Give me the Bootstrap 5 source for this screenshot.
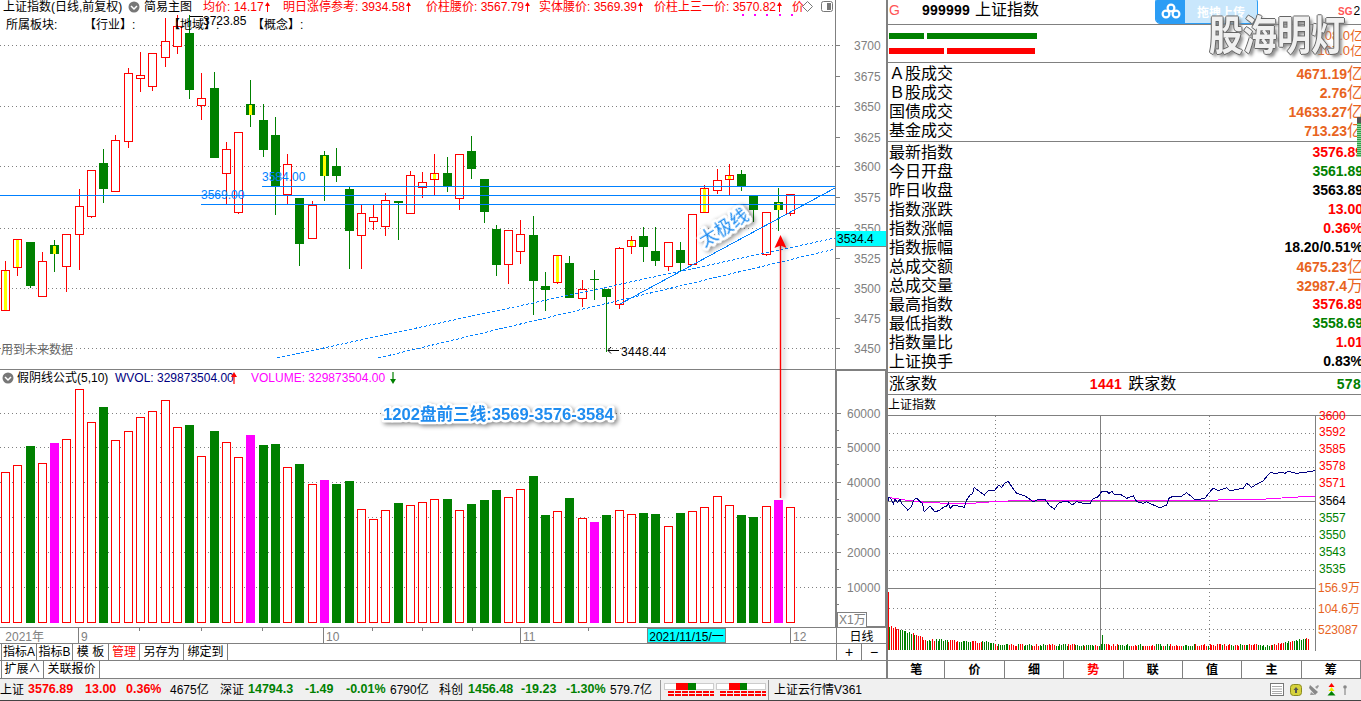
<!DOCTYPE html>
<html lang="zh-CN">
<head>
    <meta charset="UTF-8">
    <meta name="viewport" content="width=device-width, initial-scale=1.0">
    <title>上证指数</title>
    <link href="https://cdn.jsdelivr.net/npm/bootstrap@5.3.0/dist/css/bootstrap.min.css" rel="stylesheet">
    <style>
        html, body { margin: 0; background: #fff; overflow: hidden; }
        body { font-family: "Liberation Sans", "Noto Sans CJK SC", sans-serif; font-size: 12px; line-height: 1; color: #000; }
        .app { width: 1361px; height: 701px; }
        .work { height: 679px; }
        .left-col { width: 886px; }
        .right-col { width: 475px; border-left: 2px solid #808080; overflow: hidden; position: relative; }

        /* chart headers lie over the chart */
        .chart-wrap { height: 627px; position: relative; }
        #kline { display: block; }
        .hdr-one, .hdr-two, .vol-hdr { position: absolute; display: grid; align-items: center; white-space: nowrap; }
        .hdr-one { left: 3px; top: 0; height: 13px; grid-template-columns: 125px 16px 59px 80px 143px 113px 115px 138px 10px 19px 14px; color: #f00; }
        .hdr-two { left: 6px; top: 18px; height: 13px; grid-template-columns: 78px 84px 84px 60px; }
        .vol-hdr { left: 2px; top: 371px; height: 13px; grid-template-columns: 15px 98px 116px 20px 139px 10px; }
        .txt-black { color: #000; }
        .txt-navy { color: #000080; }
        .txt-pink { color: #f0f; }
        .arrow-mark { display: inline-block; vertical-align: -1px; margin-left: 1px; }

        .axis-row { height: 17px; border-top: 1px solid #808080; border-bottom: 1px solid #808080; color: #808080; }
        .axis-track { width: 836px; position: relative; padding: 3px 0 0 2px; }
        .axis-mark { position: absolute; top: 0; bottom: 0; border-left: 1px solid #808080; padding: 3px 0 0 2px; }
        .axis-tick { position: absolute; top: 0; height: 3px; border-left: 1px solid #808080; }
        .date-box { position: absolute; left: 647px; top: 0; bottom: 0; width: 79px; background: #0ff; color: #000; border: 1px solid #808080; text-align: center; padding-top: 2px; }
        .period-box { width: 50px; border-left: 1px solid #808080; color: #000; text-align: center; font-size: 12px; padding-top: 3px; }

        .tool-row { height: 17px; border-bottom: 1px solid #808080; padding-left: 1px; }
        .tool-row.second { height: 18px; }
        .tool-btn { width: 36px; border-right: 1px solid #808080; padding-top: 2px; text-align: center; white-space: nowrap; }
        .tool-btn:first-child { border-left: 1px solid #808080; }
        .tb-short { width: 31px; }
        .tb-long { width: 44px; }
        .tb-more { width: 43px; }
        .tb-link { width: 56px; }
        .tool-fill { flex: 1; }
        .zoom-box { width: 50px; border-left: 1px solid #808080; }
        .zoom-box span { flex: 1; text-align: center; padding-top: 2px; font-size: 14px; line-height: 12px; }
        .zoom-box span + span { border-left: 1px solid #808080; }

        .quote-title { height: 25px; border-bottom: 1px solid #808080; font-size: 16px; padding: 0 0 5px 1px; }
        .q-g { width: 33px; color: #f55; font-size: 14px; }
        .q-code { font-size: 14px; font-weight: 700; letter-spacing: .2px; margin-right: 5px; }
        .bars-box { height: 38px; border-bottom: 1px solid #808080; padding-left: 1px; position: relative; }
        .flow-bar { height: 6px; width: 148px; margin-top: 8px; gap: 3px; }
        .flow-bar + .flow-bar { margin-top: 9px; }
        .flow-bar i { display: block; height: 6px; }
        .flow-green i { background: #008000; }
        .flow-red i { background: #f00; }
        .fg-a { width: 35px; } .fg-b { width: 110px; } .fr-a { width: 55px; } .fr-b { width: 88px; }
        .flow-num { position: absolute; right: -2px; color: #e8641e; font-size: 13px; line-height: 15px; }
        .flow-num.top-one { top: 3px; } .flow-num.top-two { top: 18px; }

        .q-block { border-bottom: 1px solid #808080; padding: 1px 0 1px 1px; }
        .q-row { height: 19px; line-height: 19px; font-size: 16px; white-space: nowrap; }
        .q-num { font-size: 14px; font-weight: 700; margin-right: -2px; }
        .q-num em { font-style: normal; font-weight: 400; font-size: 16px; }
        .up { color: #f00; } .down { color: #008000; } .flat { color: #000; } .amt { color: #e8641e; }
        .breadth { height: 22px; border-bottom: 1px solid #808080; font-size: 16px; line-height: 22px; padding-left: 1px; white-space: nowrap; }
        .breadth b { font-size: 14px; letter-spacing: .3px; }
        .br-label { width: 160px; } .br-num { width: 76px; text-align: right; margin-right: 6px; } .br-label2 { width: 211px; }
        .mini-title { height: 21px; border-bottom: 1px solid #808080; padding: 4px 0 0 0; }
        .intraday svg { display: block; overflow: visible; }
        .pager { height: 9px; }
        .page-row { height: 19px; border-top: 1px solid #808080; border-bottom: 1px solid #808080; }
        .page-row span { width: 60px; border-right: 1px solid #808080; text-align: center; padding-top: 3px; font-weight: 700; }
        .page-row span:first-child { width: 58px; }
        .page-row span.on { color: #f00; }

        .status { height: 22px; background: #f0f0f0; border-bottom: 1px solid #444; }
        .status-grid { display: grid; grid-template-columns: 28px 57px 41px 44px 50px 28px 57px 41px 44px 49px 29px 53px 45px 44px 50px; align-items: center; white-space: nowrap; width: 660px; }
        .status-grid b { font-size: 12.5px; }
        .status-sep { border-left: 1px solid #999; height: 20px; align-self: center; margin-right: 2px; }
        .market-name { width: 500px; padding-left: 3px; }
        .tray { gap: 6px; margin-left: -1px; }

        .upload-badge { position: absolute; left: 1155px; top: -3px; width: 103px; height: 27px; border-radius: 5px; overflow: hidden; border: 1px solid #2b9df5; background: #c9e7fc; color: #fff; font-weight: 700; font-size: 12px; }
        .upload-icon { width: 29px; background: #2b9df5; }
        .upload-label { width: 72px; text-align: center; padding-top: 9px; }
        .stamp { position: absolute; left: 1209px; top: 9px; font-family: "Noto Sans CJK SC", sans-serif; font-weight: 700; font-size: 34px; line-height: 40px; color: rgba(255,255,255,.9); white-space: nowrap; transform: scaleY(1.2); transform-origin: top; text-shadow: 1px 0 #666, -1px 0 #666, 0 1px #666, 0 -1px #666, 3px 3px 3px #888; }
        .sg-tag { position: absolute; left: 1338px; top: 5px; font-size: 10px; font-weight: 700; color: #f55; }
        .sg-tag i { font-style: normal; color: #000; font-weight: 400; margin-left: 1px; font-size: 12px; }
        .level-strip { position: absolute; left: 1357px; top: 117px; width: 4px; height: 40px; background: repeating-linear-gradient(#2ea043 0 1px, #8fd19e 1px 2px); border-top: 6px solid #555; }
    </style>
</head>
<body>
<div class="app d-flex flex-column position-relative">
    <div class="work d-flex">
        <div class="left-col d-flex flex-column">
            <div class="chart-wrap">
                <svg id="kline" width="886" height="627" viewBox="0 0 886 627"></svg>

                <div class="hdr-one">
                    <span class="txt-black">上证指数(日线,前复权)</span>
                    <svg width="12" height="12" viewBox="0 0 12 12"><circle cx="6" cy="6" r="5.5" fill="#777"/><path d="M3 5l3 3 3-3" fill="none" stroke="#fff" stroke-width="1.5"/></svg>
                    <span class="txt-black">简易主图</span>
                    <span>均价: 14.17<svg class="arrow-mark" width="5" height="10" viewBox="0 0 5 10"><path d="M2.5 0L5 4H3v6H2V4H0z" fill="#f00"/></svg></span>
                    <span>明日涨停参考: 3934.58<svg class="arrow-mark" width="5" height="10" viewBox="0 0 5 10"><path d="M2.5 0L5 4H3v6H2V4H0z" fill="#f00"/></svg></span>
                    <span>价柱腰价: 3567.79<svg class="arrow-mark" width="5" height="10" viewBox="0 0 5 10"><path d="M2.5 0L5 4H3v6H2V4H0z" fill="#f00"/></svg></span>
                    <span>实体腰价: 3569.39<svg class="arrow-mark" width="5" height="10" viewBox="0 0 5 10"><path d="M2.5 0L5 4H3v6H2V4H0z" fill="#f00"/></svg></span>
                    <span>价柱上三一价: 3570.82<svg class="arrow-mark" width="5" height="10" viewBox="0 0 5 10"><path d="M2.5 0L5 4H3v6H2V4H0z" fill="#f00"/></svg></span>
                    <span>价</span>
                    <svg width="11" height="11" viewBox="0 0 11 11"><path d="M5.5.5l5 5-5 5-5-5z" fill="#fff" stroke="#777"/></svg>
                    <svg width="12" height="11" viewBox="0 0 12 11"><rect x=".5" y=".5" width="11" height="10" rx="2" fill="#fff" stroke="#777"/><rect x="6" y="2" width="4" height="7" fill="#777"/></svg>
                </div>
                <div class="hdr-two">
                    <span>所属板块:</span>
                    <span>【行业】:</span>
                    <span>【地域】:</span>
                    <span>【概念】:</span>
                </div>
                <div class="vol-hdr">
                    <svg width="12" height="12" viewBox="0 0 12 12"><circle cx="6" cy="6" r="5.5" fill="#777"/><path d="M3 5l3 3 3-3" fill="none" stroke="#fff" stroke-width="1.5"/></svg>
                    <span>假阴线公式(5,10)</span>
                    <span class="txt-navy">WVOL: 329873504.00</span>
                    <svg width="6" height="12" viewBox="0 0 6 12"><path d="M3 0l3 5H3.6v7H2.4V5H0z" fill="#f00"/></svg>
                    <span class="txt-pink">VOLUME: 329873504.00</span>
                    <svg width="6" height="12" viewBox="0 0 6 12"><path d="M3 12l3-5H3.6V0H2.4v7H0z" fill="#008000"/></svg>
                </div>
            </div>

            <div class="axis-row d-flex">
                <div class="axis-track" id="axisTrack">
                    <span>&nbsp;2021年</span>
                    <span class="date-box">2021/11/15/一</span>
                </div>
                <div class="period-box">日线</div>
            </div>
            <div class="tool-row d-flex">
                <span class="tool-btn">指标A</span>
                <span class="tool-btn">指标B</span>
                <span class="tool-btn">模 板</span>
                <span class="tool-btn tb-short up">管理</span>
                <span class="tool-btn tb-long">另存为</span>
                <span class="tool-btn tb-long">绑定到</span>
                <span class="tool-fill"></span>
                <div class="zoom-box d-flex"><span>+</span><span>−</span></div>
            </div>
            <div class="tool-row second d-flex">
                <span class="tool-btn tb-more">扩展∧</span>
                <span class="tool-btn tb-link">关联报价</span>
            </div>
        </div>

        <div class="right-col d-flex flex-column">
            <div class="quote-title d-flex align-items-center">
                <span class="q-g">G</span>
                <span class="q-code">999999</span>
                <span>上证指数</span>
            </div>
            <div class="bars-box">
                <div class="flow-bar flow-green d-flex"><i class="fg-a"></i><i class="fg-b"></i></div>
                <div class="flow-bar flow-red d-flex"><i class="fr-a"></i><i class="fr-b"></i></div>
                <span class="flow-num top-one">108.0亿</span>
                <span class="flow-num top-two">107.0亿</span>
            </div>
            <div class="q-block">
                <div class="q-row d-flex justify-content-between"><span>Ａ股成交</span><span class="q-num amt">4671.19<em>亿</em></span></div>
                <div class="q-row d-flex justify-content-between"><span>Ｂ股成交</span><span class="q-num amt">2.76<em>亿</em></span></div>
                <div class="q-row d-flex justify-content-between"><span>国债成交</span><span class="q-num amt">14633.27<em>亿</em></span></div>
                <div class="q-row d-flex justify-content-between"><span>基金成交</span><span class="q-num amt">713.23<em>亿</em></span></div>
            </div>
            <div class="q-block">
                <div class="q-row d-flex justify-content-between"><span>最新指数</span><span class="q-num up">3576.89</span></div>
                <div class="q-row d-flex justify-content-between"><span>今日开盘</span><span class="q-num down">3561.89</span></div>
                <div class="q-row d-flex justify-content-between"><span>昨日收盘</span><span class="q-num flat">3563.89</span></div>
                <div class="q-row d-flex justify-content-between"><span>指数涨跌</span><span class="q-num up">13.00</span></div>
                <div class="q-row d-flex justify-content-between"><span>指数涨幅</span><span class="q-num up">0.36%</span></div>
                <div class="q-row d-flex justify-content-between"><span>指数振幅</span><span class="q-num flat">18.20/0.51%</span></div>
                <div class="q-row d-flex justify-content-between"><span>总成交额</span><span class="q-num amt">4675.23<em>亿</em></span></div>
                <div class="q-row d-flex justify-content-between"><span>总成交量</span><span class="q-num amt">32987.4<em>万</em></span></div>
                <div class="q-row d-flex justify-content-between"><span>最高指数</span><span class="q-num up">3576.89</span></div>
                <div class="q-row d-flex justify-content-between"><span>最低指数</span><span class="q-num down">3558.69</span></div>
                <div class="q-row d-flex justify-content-between"><span>指数量比</span><span class="q-num up">1.01</span></div>
                <div class="q-row d-flex justify-content-between"><span>上证换手</span><span class="q-num flat">0.83%</span></div>
            </div>
            <div class="breadth d-flex">
                <span class="br-label">涨家数</span>
                <b class="br-num up">1441</b>
                <span class="br-label2">跌家数</span>
                <b class="down">578</b>
            </div>
            <div class="mini-title">上证指数</div>
            <div class="intraday">
                <svg id="trend" width="473" height="235" viewBox="888 416 473 235"></svg>
            </div>
            <div class="pager"></div>
            <div class="page-row d-flex">
                <span>笔</span><span>价</span><span>细</span><span class="on">势</span><span>联</span><span>值</span><span>主</span><span>筹</span>
            </div>
        </div>
    </div>

    <div class="status d-flex">
        <div class="status-grid">
            <span>上证</span><b class="up">3576.89</b><b class="up">13.00</b><b class="up">0.36%</b><span>4675亿</span>
            <span>深证</span><b class="down">14794.3</b><b class="down">-1.49</b><b class="down">-0.01%</b><span>6790亿</span>
            <span>科创</span><b class="down">1456.48</b><b class="down">-19.23</b><b class="down">-1.30%</b><span>579.7亿</span>
        </div>
        <span class="status-sep"></span>
        <svg width="105" height="20" viewBox="662 680 105 20" class="align-self-center">
            <rect x="663.5" y="683.5" width="49" height="6" fill="#fff" stroke="#ccc"/>
            <rect x="675" y="683" width="12" height="7" fill="#f00"/><rect x="687" y="683" width="8" height="7" fill="#008000"/>
            <rect x="715.5" y="683.5" width="49" height="6" fill="#fff" stroke="#ccc"/>
            <rect x="728" y="683" width="11" height="7" fill="#f00"/><rect x="739" y="683" width="7" height="7" fill="#008000"/>
            <path d="M667 692h46M667 695h46M719 692h46M719 695h46" stroke="#f00" stroke-width="2" stroke-dasharray="6 1"/>
        </svg>
        <span class="status-sep"></span>
        <span class="market-name align-self-center">上证云行情V361</span>
        <div class="tray d-flex align-items-center">
            <svg width="14" height="13" viewBox="0 0 14 13"><rect x=".5" y=".5" width="13" height="12" fill="#fff" stroke="#777"/><path d="M2 3.5h10M2 6h10M2 8.5h10M2 10.5h10" stroke="#aaa"/></svg>
            <svg width="12" height="12" viewBox="0 0 12 12"><rect x=".5" y=".5" width="11" height="11" rx="3" fill="#d6d23c" stroke="#8a8a20"/><path d="M6 3l2.5 3H7v3H5V6H3.5z" fill="#555"/></svg>
            <svg width="12" height="12" viewBox="0 0 12 12"><path d="M2 1l8 7-3 3L1 4z" fill="#888"/><path d="M7 3l3-2 1 1-2 3zM3 8l-1 3h5z" fill="#999"/></svg>
            <svg width="11" height="13" viewBox="0 0 11 13"><path d="M5.5 0l3 4h-6z" fill="#f00"/><path d="M5.5 4l3 4h-6z" fill="#ee0"/><path d="M5.5 8l4 4.5h-8z" fill="#008000"/></svg>
            <svg width="4" height="10" viewBox="0 0 4 10"><circle cx="2" cy="2" r="1.8" fill="#888"/><rect x="1.3" y="3" width="1.4" height="7" fill="#999"/></svg>
        </div>
    </div>

    <div class="upload-badge d-flex">
        <span class="upload-icon d-flex align-items-center justify-content-center">
            <svg width="20" height="16" viewBox="0 0 20 16"><g fill="none" stroke="#fff" stroke-width="2.2"><circle cx="5" cy="11" r="3.4"/><circle cx="15" cy="11" r="3.4"/><circle cx="10" cy="5" r="3.4"/></g></svg>
        </span>
        <span class="upload-label">拖拽上传</span>
    </div>
    <div class="stamp">股海明灯</div>
    <div class="sg-tag">SG<i>2</i></div>
    <div class="level-strip"></div>
</div>

<script src="https://cdn.jsdelivr.net/npm/bootstrap@5.3.0/dist/js/bootstrap.bundle.min.js"></script>
<script>
    const kline = document.getElementById('kline');
    const trend = document.getElementById('trend');
    const GRAY = '#808080', BLUE = '#0080ff', RED = '#f00', GREEN = '#008000', PINK = '#f0f';
    const CRISP = {'shape-rendering': 'crispEdges'};

    function shape(svg, name, attrs, text) {
        const el = document.createElementNS('http://www.w3.org/2000/svg', name);
        for (const k in attrs) el.setAttribute(k, attrs[k]);
        if (text !== undefined) el.textContent = text;
        svg.appendChild(el);
        return el;
    }
    function line(svg, x1, y1, x2, y2, color, extra) {
        return shape(svg, 'line', Object.assign({x1, y1, x2, y2, stroke: color, 'stroke-width': 1}, CRISP, extra || {}));
    }
    function dotted(svg, x1, y, x2) {
        line(svg, x1, y + .5, x2, y + .5, GRAY, {'stroke-dasharray': '1 3'});
    }
    function label(svg, x, y, s, color, extra) {
        return shape(svg, 'text', Object.assign({x, y, fill: color, 'font-size': 12, 'font-family': '"Liberation Sans", "Noto Sans CJK SC", sans-serif'}, extra || {}), s);
    }

    // grid + axis of the candle panel
    [[45, '3700'], [106, '3650'], [166, '3600'], [228, '3550'], [288, '3500'], [348, '3450']].forEach(g => dotted(kline, 0, g[0], 836));
    [[45, '3700'], [76, '3675'], [106, '3650'], [137, '3625'], [166, '3600'], [197, '3575'], [228, '3550'], [258, '3525'], [288, '3500'], [318, '3475'], [348, '3450']].forEach(g => {
        line(kline, 836, g[0] + .5, 840, g[0] + .5, GRAY);
        label(kline, 854, g[0] + 5, g[1], GRAY);
    });
    line(kline, 835.5, 0, 835.5, 369, GRAY);
    line(kline, 0, 369.5, 836, 369.5, GRAY);

    // grid + axis of the volume panel
    [[413, '60000'], [447, '50000'], [482, '40000'], [517, '30000'], [552, '20000'], [587, '10000']].forEach(g => {
        dotted(kline, 0, g[0], 836);
        line(kline, 836, g[0] + .5, 841, g[0] + .5, GRAY);
        line(kline, 836, g[0] + 17.5, 839, g[0] + 17.5, GRAY);
        label(kline, 847, g[0] + 5, g[1], GRAY);
    });
    shape(kline, 'rect', {x: 836, y: 370, width: 50, height: 257, fill: 'none', stroke: GRAY, 'stroke-width': 2});
    shape(kline, 'rect', {x: 837.5, y: 612.5, width: 29, height: 15, fill: '#fff', stroke: GRAY});
    label(kline, 839, 624, 'X1万', GRAY);

    // type, bodyTop, bodyBottom, wickTop, wickBottom  (r red, g green, y red with yellow, h green with yellow)
    const candles = [
        ['y',270,310,261,310],['y',239,267,239,276],['g',242,286,242,288],['r',261,296,252,296],['h',245,254,240,272],
        ['r',234,266,234,292],['r',206,234,189,270],['r',170,216,170,218],['g',163,189,149,203],['r',140,191,135,191],
        ['r',73,141,68,148],['r',75,78,52,92],['r',53,86,53,91],['r',41,57,18,67],['r',26,46,15,54],
        ['g',33,90,15,99],['r',98,105,73,120],['g',88,158,72,158],['r',149,173,142,204],['r',132,212,132,214],
        ['h',104,115,80,127],['g',120,150,104,157],['g',135,186,117,215],['r',164,194,154,204],['g',198,244,198,266],
        ['r',205,238,201,238],['h',155,176,151,201],['g',166,176,148,182],['g',189,231,187,269],['r',213,235,205,269],
        ['r',217,221,205,230],['r',200,226,193,236],['g',201,203,201,240],['r',175,213,171,214],['r',182,187,172,198],
        ['y',173,179,154,195],['g',173,186,157,192],['r',154,198,154,210],['g',151,169,136,179],['g',179,212,179,223],
        ['g',229,265,225,276],['r',230,264,230,284],['r',234,251,220,264],['g',235,281,216,315],['g',286,290,272,311],
        ['y',255,282,255,284],['g',263,298,256,298],['r',289,298,280,307],['g',279,280,270,300],['g',289,297,289,352],
        ['r',248,304,247,309],['y',240,246,236,254],['g',236,247,227,262],['g',251,261,227,266],['r',242,266,242,271],
        ['g',250,263,242,271],['r',214,264,214,264],['y',188,212,185,212],['r',180,190,169,194],['y',175,179,164,195],
        ['g',174,186,170,191],['g',196,210,196,222],['r',212,254,212,256],['h',202,210,188,231],['r',194,213,194,216]
    ];
    const volTops = [
        472,465,446,463,443,439,389,422,407,440,431,417,411,400,427,425,456,431,442,457,435,445,444,467,464,484,480,484,481,509,519,510,503,
        505,502,499,499,510,504,500,490,497,489,476,515,511,498,518,522,515,510,514,513,514,526,513,511,507,496,505,515,517,506,500,507
    ];
    const colX = i => Math.floor(5.5 + i * 12.27);

    candles.forEach((c, i) => {
        const x = colX(i), wick = (c[0] === 'g' || c[0] === 'h') ? GREEN : RED;
        line(kline, x + .5, c[3], x + .5, c[4], wick);
        if (wick === RED) {
            shape(kline, 'rect', Object.assign({x: x - 3.5, y: c[1] + .5, width: 8, height: c[2] - c[1], fill: '#fff', stroke: RED}, CRISP));
        } else {
            shape(kline, 'rect', Object.assign({x: x - 4, y: c[1], width: 9, height: Math.max(1, c[2] - c[1]), fill: GREEN}, CRISP));
        }
        if (c[0] === 'y' || c[0] === 'h') {
            shape(kline, 'rect', Object.assign({x: x - 1, y: c[1] + 1, width: 3, height: c[2] - c[1] - 1, fill: '#ff0'}, CRISP));
        }
    });

    // volume colours: pink bars are the "false bearish" days
    const pinkBars = [4, 20, 26, 48, 63];
    volTops.forEach((top, i) => {
        const x = colX(i), c = candles[i][0];
        if (pinkBars.includes(i)) {
            shape(kline, 'rect', Object.assign({x: x - 4, y: top, width: 9, height: 623 - top, fill: PINK}, CRISP));
        } else if (c === 'g' || c === 'h') {
            shape(kline, 'rect', Object.assign({x: x - 4, y: top, width: 9, height: 623 - top, fill: GREEN}, CRISP));
        } else {
            shape(kline, 'rect', Object.assign({x: x - 3.5, y: top + .5, width: 8, height: 622 - top, fill: '#fff', stroke: RED}, CRISP));
        }
    });

    // drawn lines on the chart
    line(kline, 0, 195.5, 835, 195.5, BLUE);
    line(kline, 262, 186.5, 835, 186.5, BLUE);
    line(kline, 201, 204.5, 835, 204.5, BLUE);
    label(kline, 262, 181, '3584.00', BLUE);
    label(kline, 201, 199, '3569.00', BLUE);
    line(kline, 620, 304, 835, 188, BLUE);
    line(kline, 277, 358, 835, 238, BLUE, {'stroke-dasharray': '3 2'});
    line(kline, 378, 358, 835, 249, BLUE, {'stroke-dasharray': '3 2'});

    // min / max markers
    line(kline, 190, 16.5, 203, 16.5, '#000');
    label(kline, 203, 25, '3723.85', '#000');
    line(kline, 608, 350.5, 619, 350.5, '#000');
    shape(kline, 'path', {d: 'M611 347l-3 3.5 3 3', fill: 'none', stroke: '#000'});
    label(kline, 621, 356, '3448.44', '#000', {'letter-spacing': '.3'});
    label(kline, 1, 354, '用到未来数据', '#666');

    // top dots and the price tag on the axis
    [742, 754, 766, 779, 791].forEach(x => shape(kline, 'rect', {x, y: 14, width: 2, height: 2, fill: PINK}));
    shape(kline, 'rect', {x: 836, y: 231, width: 50, height: 15, fill: '#0ff'});
    line(kline, 836, 246.5, 886, 246.5, GRAY);
    label(kline, 837, 243, '3534.4', '#000');

    // hand drawn annotations
    const stickerFont = {'font-family': '"Liberation Sans", "Noto Sans CJK SC", sans-serif', fill: '#1e8cf0', stroke: '#fff', 'paint-order': 'stroke', 'stroke-linejoin': 'round', style: 'filter:drop-shadow(2px 2px 2px rgba(0,0,0,.45))'};
    shape(kline, 'text', Object.assign({}, stickerFont, {x: 724, y: 234, 'font-size': 18, 'stroke-width': 6, 'text-anchor': 'middle', transform: 'rotate(-32 724 228)'}), '太极线');
    shape(kline, 'text', Object.assign({}, stickerFont, {x: 383, y: 420, 'font-size': 16.6, 'font-weight': 700, 'stroke-width': 5}), '1202盘前三线:3569-3576-3584');
    shape(kline, 'line', {x1: 780.5, y1: 498, x2: 780.5, y2: 245, stroke: RED, 'stroke-width': 1.4, style: 'filter:drop-shadow(3px 1px 2px rgba(0,0,0,.35))'});
    shape(kline, 'path', {d: 'M780.5 235l6 13-6-2.5-6 2.5z', fill: RED, style: 'filter:drop-shadow(3px 1px 2px rgba(0,0,0,.35))'});

    // month marks on the date axis
    const track = document.getElementById('axisTrack');
    [[78, '9'], [323, '10'], [520, '11'], [790, '12']].forEach(m => {
        const el = document.createElement('span');
        el.className = 'axis-mark';
        el.textContent = m[1];
        el.style.left = m[0] + 'px';
        track.appendChild(el);
    });
    [139, 201, 262, 372, 422, 472, 588].forEach(x => {
        const el = document.createElement('span');
        el.className = 'axis-tick';
        el.style.left = x + 'px';
        track.appendChild(el);
    });

    // intraday panel, all coordinates are page coordinates
    [433, 450, 467, 484, 519, 536, 553, 570, 608, 629].forEach(y => dotted(trend, 889, y, 1315));
    line(trend, 888, 501.5, 1315, 501.5, GRAY);
    line(trend, 888, 588.5, 1315, 588.5, GRAY);
    line(trend, 995.5, 416, 995.5, 650, GRAY, {'stroke-dasharray': '1 3'});
    line(trend, 1209.5, 416, 1209.5, 650, GRAY, {'stroke-dasharray': '1 3'});
    line(trend, 1100.5, 416, 1100.5, 650, GRAY);
    line(trend, 1315.5, 416, 1315.5, 651, GRAY);
    [['3600', 420, RED], ['3592', 436, RED], ['3585', 453, RED], ['3578', 470, RED], ['3571', 487, RED], ['3564', 505, '#000'], ['3557', 522, GREEN], ['3550', 539, GREEN], ['3543', 556, GREEN], ['3535', 573, GREEN]].forEach(p => {
        label(trend, 1319, p[1], p[0], p[2]);
    });
    [['156.9万', 592], ['104.6万', 613], ['523087', 634]].forEach(p => label(trend, 1318, p[1], p[0], '#e8641e', {'font-size': 12}));

    // intraday volume bars
    let color = RED, runLeft = 1, seed = 7;
    for (let i = 0; i < 236; i++) {
        seed = (seed * 137 + 29) % 1000;
        const x = Math.floor(888 + i * 1.79);
        if (runLeft-- <= 0) { color = color === RED ? GREEN : RED; runLeft = seed % 7; }
        let top = 644 + (seed % 3);
        if (i < 60) top = 637 + i * .08 + (seed % 3);
        if (i < 20) top = 625 + i * .6 + (seed % 2);
        if (i > 210) top = 646 - (i - 210) * .34 + (seed % 2);
        if (i === 0) top = 592;
        line(trend, x + .5, top, x + .5, 650, i === 0 ? RED : color);
    }
    line(trend, 1102.5, 635, 1102.5, 650, GREEN);

    // price and average lines, traced at 3x so divided back here
    const pricePts = [8,245,12,230,20,240,25,252,30,238,38,248,45,236,50,252,58,258,68,270,78,262,88,238,95,235,105,245,112,250,118,276,128,265,135,258,150,276,165,270,175,262,185,258,190,250,196,265,205,255,220,258,238,262,245,240,255,225,262,222,268,202,280,212,298,225,310,212,328,212,342,195,350,203,358,190,370,184,380,200,395,220,410,225,420,228,445,245,460,238,480,238,492,255,508,268,520,250,535,245,550,245,562,255,575,245,595,250,615,252,622,238,640,230,650,214,665,214,672,220,680,214,690,225,705,222,725,235,745,228,755,245,775,250,785,245,800,253,825,263,845,255,852,235,865,228,890,228,905,218,920,230,930,240,945,238,960,235,975,215,985,205,1000,212,1025,203,1035,212,1075,205,1085,190,1100,202,1115,192,1135,182,1155,158,1175,160,1190,156,1200,160,1208,154,1235,160,1250,158,1265,156,1290,152];
    const avgPts = [8,232,60,240,100,245,140,248,240,252,260,250,340,244,440,241,650,241,850,241,1000,240,1130,238,1190,234,1290,228];
    const toPage = pts => {
        const out = [];
        for (let i = 0; i < pts.length; i += 2) out.push((885 + pts[i] / 3).toFixed(1) + ',' + (420 + pts[i + 1] / 3).toFixed(1));
        return out.join(' ');
    };
    shape(trend, 'polyline', Object.assign({points: toPage(avgPts), fill: 'none', stroke: PINK, 'stroke-width': 1}, CRISP));
    shape(trend, 'polyline', Object.assign({points: toPage(pricePts), fill: 'none', stroke: '#000080', 'stroke-width': 1}, CRISP));
</script>
</body>
</html>
